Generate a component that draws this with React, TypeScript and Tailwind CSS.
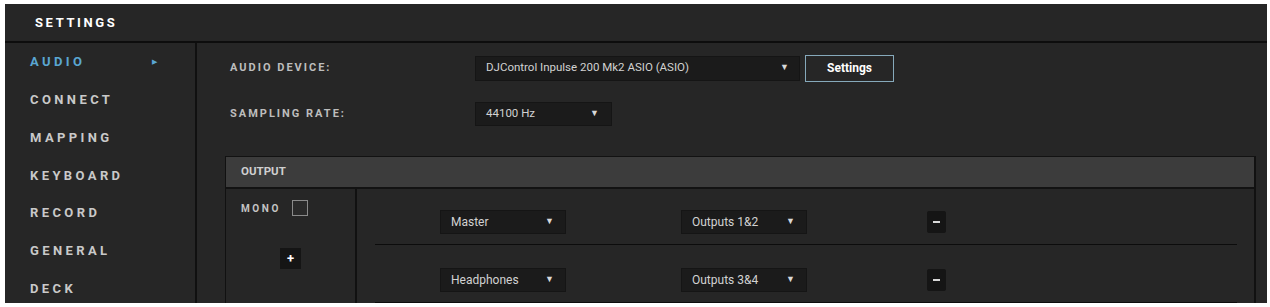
import React from "react";

const NAV = ["AUDIO", "CONNECT", "MAPPING", "KEYBOARD", "RECORD", "GENERAL", "DECK"];

const font = { fontFamily: "Roboto, 'Liberation Sans', sans-serif" };

function Select({ label, width }: { label: string; width: string }) {
    return (
        <div
            className={`${width} h-[24px] bg-[#1b1b1b] border border-[#151515] flex items-center justify-between pl-[10px] pr-[11px] text-[12px] text-[#d2d2d2]`}
        >
            <span>{label}</span>
            <span className="text-[9px] text-[#d8d8d8]">▼</span>
        </div>
    );
}

function OutputRow({ name, out, first }: { name: string; out: string; first?: boolean }) {
    return (
        <div
            className={`ml-[18px] mr-[17px] pb-[10px] border-b border-[#0c0c0c] flex items-center ${
                first ? "pt-[21px]" : "pt-[23px]"
            }`}
        >
            <div className="ml-[65px]">
                <Select label={name} width="w-[126px]" />
            </div>
            <div className="ml-[115px]">
                <Select label={out} width="w-[126px]" />
            </div>
            <button className="ml-[120px] w-[19px] h-[22px] bg-[#151515] rounded-[2px] flex items-center justify-center">
                <span className="block w-[7px] h-[2px] bg-[#d8d8d8]" />
            </button>
        </div>
    );
}

export default function App() {
    return (
        <div className="bg-white w-[1270px] h-[307px] pt-[4px] pl-[5px]" style={font}>
            <div className="w-[1262px] h-[299px] bg-[#262626] overflow-hidden flex flex-col">
                {/* header */}
                <div className="h-[39px] flex items-center pl-[30px] border-b-2 border-[#0d0d0d] shrink-0">
                    <span className="text-white font-bold text-[13px] tracking-[2.6px]">SETTINGS</span>
                </div>

                <div className="flex flex-1 min-h-0">
                    {/* sidebar */}
                    <div className="w-[192px] border-r-2 border-[#101010] shrink-0 flex flex-col">
                        {NAV.map((item, i) => (
                            <div key={item} className="h-[37.8px] shrink-0 flex items-center pl-[25px] pr-[38px] justify-between">
                                <span
                                    className={`font-bold text-[13px] tracking-[3.4px] ${
                                        i === 0 ? "text-[#5aa6d2]" : "text-[#c9c9c9]"
                                    }`}
                                >
                                    {item}
                                </span>
                                {i === 0 && <span className="text-[7px] text-[#5aa6d2]">▶</span>}
                            </div>
                        ))}
                    </div>

                    {/* content */}
                    <div className="flex-1 min-w-0">
                        <div className="flex items-center mt-[12px] h-[26px]">
                            <span className="w-[278px] pl-[33px] font-bold text-[11px] tracking-[2px] text-[#bdbdbd] shrink-0">
                                AUDIO DEVICE:
                            </span>
                            <div className="w-[325px] h-[25px] bg-[#1b1b1b] border border-[#151515] flex items-center justify-between pl-[10px] pr-[10px] text-[11.5px] text-[#d2d2d2]">
                                <span>DJControl Inpulse 200 Mk2 ASIO (ASIO)</span>
                                <span className="text-[9px] text-[#d8d8d8]">▼</span>
                            </div>
                            <button className="ml-[5px] w-[89px] h-[27px] border border-[#86a9bb] bg-[#262626] text-white font-bold text-[12px]">
                                Settings
                            </button>
                        </div>

                        <div className="flex items-center mt-[21px] h-[24px]">
                            <span className="w-[278px] pl-[33px] font-bold text-[11px] tracking-[2px] text-[#bdbdbd] shrink-0">
                                SAMPLING RATE:
                            </span>
                            <div className="w-[137px] h-[24px] bg-[#1b1b1b] border border-[#151515] flex items-center justify-between pl-[10px] pr-[12px] text-[11.5px] text-[#d2d2d2]">
                                <span>44100 Hz</span>
                                <span className="text-[9px] text-[#d8d8d8]">▼</span>
                            </div>
                        </div>

                        {/* output panel */}
                        <div className="ml-[28px] mr-[11px] mt-[30px] border-l border-r-2 border-[#111]">
                            <div className="h-[33px] bg-[#3c3c3c] border-t border-b-2 border-[#121212] flex items-center pl-[15px]">
                                <span className="font-bold text-[11.5px] text-[#cfcfcf]">OUTPUT</span>
                            </div>
                            <div className="flex">
                                <div className="w-[131px] border-r-2 border-[#111] shrink-0 flex flex-col h-[130px]">
                                    <div className="flex items-center mt-[11px] pl-[15px]">
                                        <span className="font-bold text-[10px] tracking-[2.6px] text-[#c4c4c4]">MONO</span>
                                        <span className="ml-[11px] w-[16px] h-[16px] border border-[#8a8a8a] bg-[#2a2a2a]" />
                                    </div>
                                    <button className="mt-[32px] mx-auto w-[21px] h-[21px] bg-[#151515] flex items-center justify-center text-white font-bold text-[13px] leading-none">
                                        +
                                    </button>
                                </div>
                                <div className="flex-1 min-w-0">
                                    <OutputRow name="Master" out="Outputs 1&2" first />
                                    <OutputRow name="Headphones" out="Outputs 3&4" />
                                </div>
                            </div>
                        </div>
                    </div>
                </div>
            </div>
        </div>
    );
}
